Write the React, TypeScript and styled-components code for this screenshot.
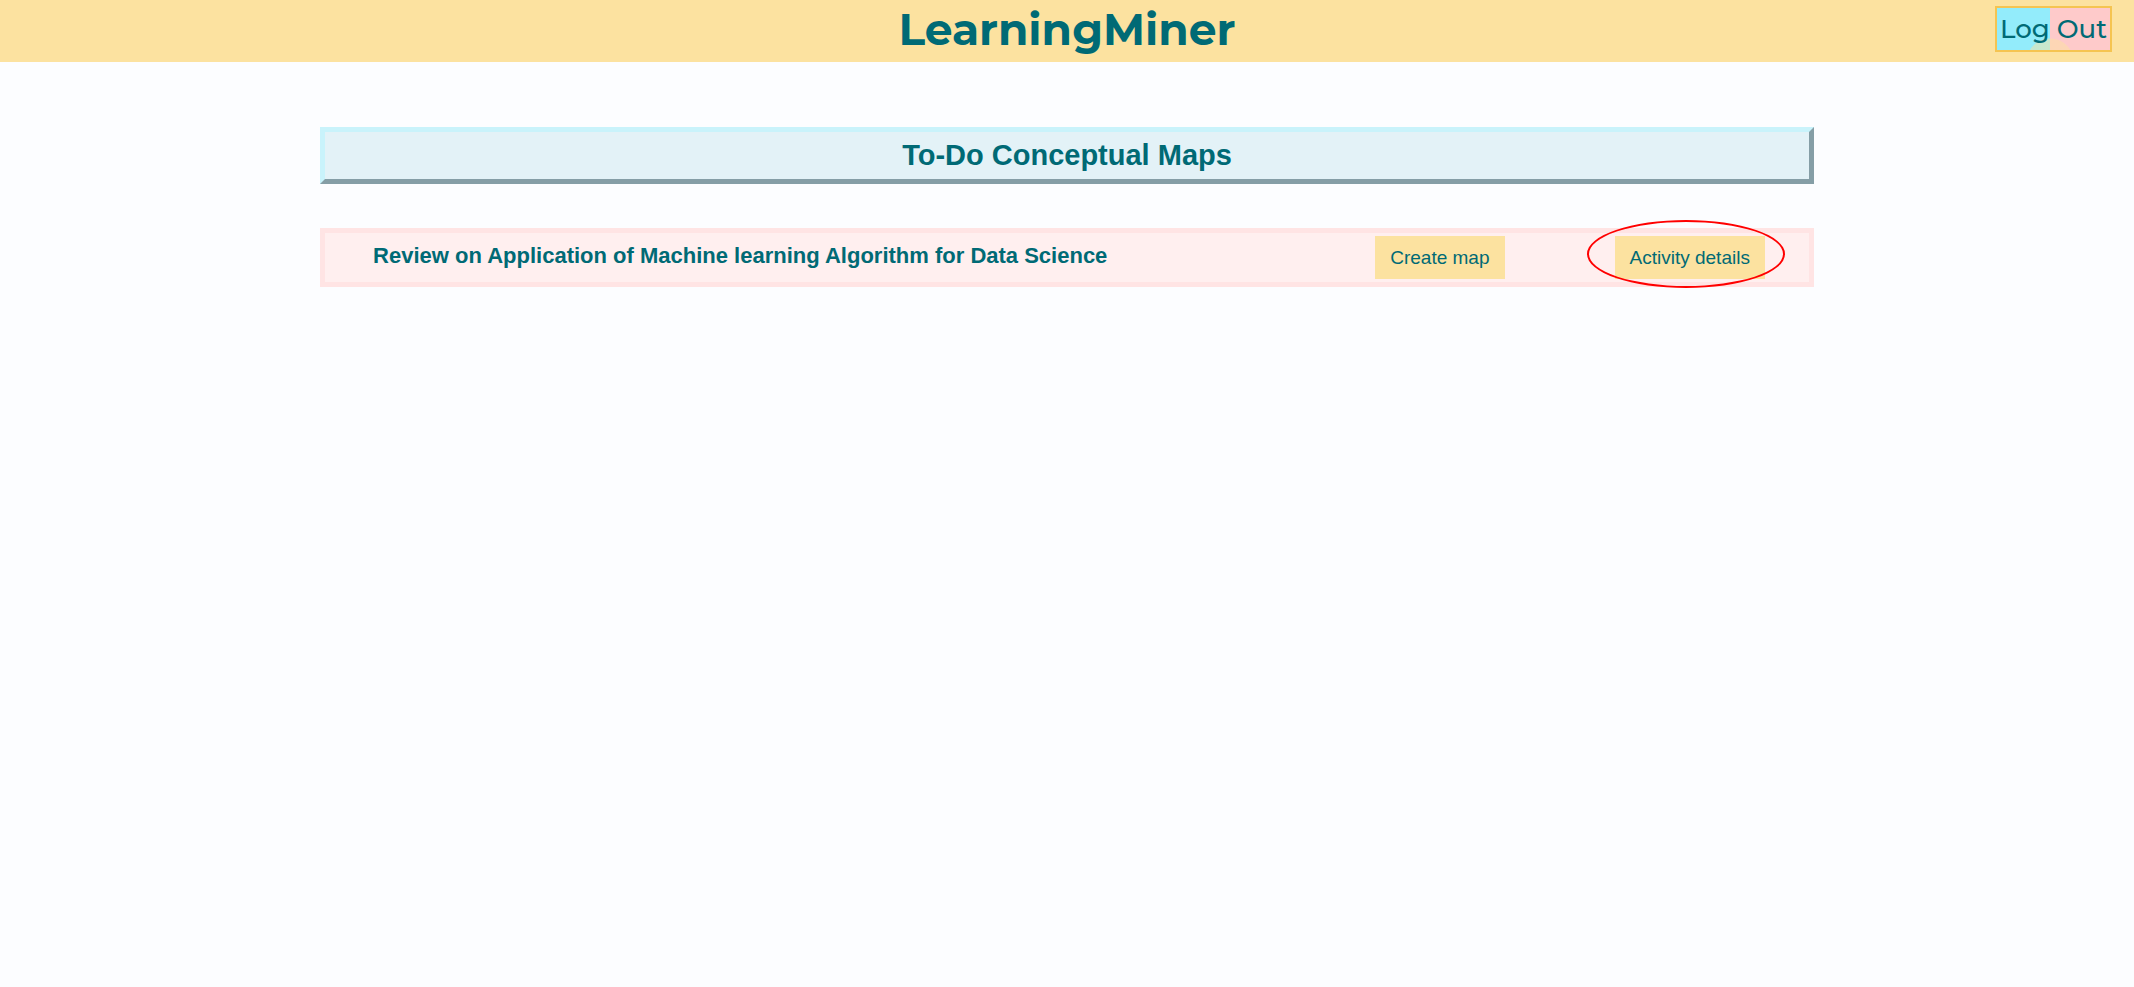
import React from "react";
import styled, { createGlobalStyle } from "styled-components";

const GlobalStyle = createGlobalStyle`
  * { box-sizing: border-box; }
  body {
    margin: 0;
    background: #fcfdff;
    color: #006a75;
    font-family: "Liberation Sans", Arial, sans-serif;
  }
`;

const Page = styled.div`
  min-height: 100vh;
`;

const Header = styled.header`
  display: grid;
  grid-template-columns: 1fr auto 1fr;
  align-items: center;
  height: 62px;
  padding: 0 22px 4px;
  background: #fce2a0;
  font-family: Montserrat, Inter, sans-serif;
`;

const Brand = styled.h1`
  grid-column: 2;
  margin: 0;
  font-size: 44px;
  line-height: 56px;
  font-weight: 700;
`;

const LogOutButton = styled.button`
  justify-self: end;
  height: 46px;
  padding: 0 3px;
  border: 2px solid #f5c451;
  background:
    radial-gradient(circle at 47% 54px, #fce2a080 0 23px, transparent 24px),
    linear-gradient(to right, #93ecfb 47%, #fecaca 47%);
  color: inherit;
  font-family: inherit;
  font-size: 26px;
  line-height: 32px;
  font-weight: 500;
  cursor: pointer;
`;

const Main = styled.main`
  display: flex;
  flex-direction: column;
  gap: 44px;
  width: 70%;
  margin: 0 auto;
  padding: 65px 0 40px;
`;

const SectionTitle = styled.h2`
  margin: 0;
  padding-bottom: 1px;
  border: 5px solid;
  border-color: #c9f3fb #859ea6 #859ea6 #c9f3fb;
  background: #e3f2f7;
  font-size: 29px;
  line-height: 46px;
  text-align: center;
`;

const ActivityList = styled.ul`
  margin: 0;
  padding: 0;
  list-style: none;
`;

const ActivityRow = styled.li`
  display: flex;
  align-items: center;
  gap: 110px;
  height: 59px;
  padding: 0 44px 0 48px;
  border: 5px solid #ffe4e4;
  background: #ffefef;
`;

const ActivityName = styled.h3`
  flex: 1;
  margin: 0;
  padding-bottom: 4px;
  font-size: 22px;
  line-height: 28px;
`;

const ActionButton = styled.button`
  height: 43px;
  padding: 0 15px;
  border: 0;
  background: #fce2a0;
  color: inherit;
  font-family: inherit;
  font-size: 19px;
  line-height: 24px;
  cursor: pointer;
`;

const Highlighted = styled.span`
  position: relative;
  display: flex;
`;

const HighlightRing = styled.span`
  position: absolute;
  inset: -16px -20px -9px -28px;
  border: 2px solid #ff0000;
  border-radius: 50%;
  pointer-events: none;
`;

const activities = ["Review on Application of Machine learning Algorithm for Data Science"];

export default function App() {
  return (
    <Page>
      <GlobalStyle />
      <Header>
        <Brand>LearningMiner</Brand>
        <LogOutButton type="button">Log Out</LogOutButton>
      </Header>
      <Main>
        <SectionTitle>To-Do Conceptual Maps</SectionTitle>
        <ActivityList>
          {activities.map((name) => (
            <ActivityRow key={name}>
              <ActivityName>{name}</ActivityName>
              <ActionButton type="button">Create map</ActionButton>
              <Highlighted>
                <ActionButton type="button">Activity details</ActionButton>
                <HighlightRing />
              </Highlighted>
            </ActivityRow>
          ))}
        </ActivityList>
      </Main>
    </Page>
  );
}
